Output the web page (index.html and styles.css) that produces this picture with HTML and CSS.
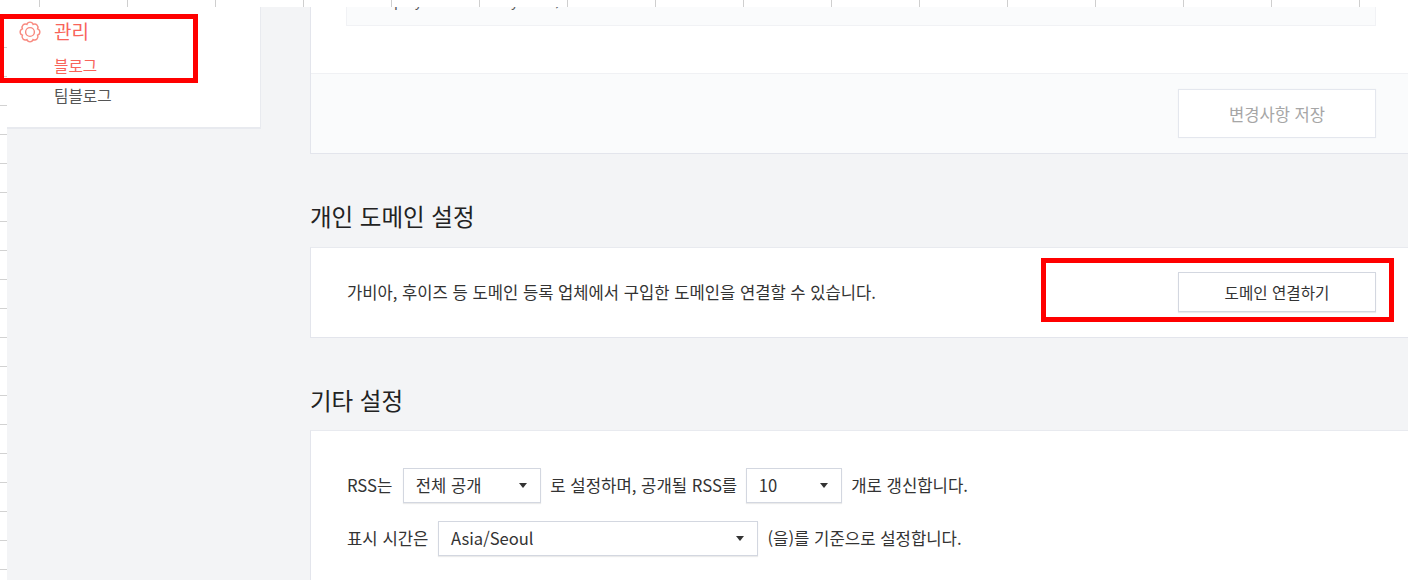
FILE: index.html
```html
<!DOCTYPE html>
<html lang="ko">
<head>
    <meta charset="UTF-8">
    <meta name="viewport" content="width=device-width, initial-scale=1.0">
    <title>블로그 관리</title>
    <link rel="stylesheet" href="styles.css">
</head>
<body>
    <div class="sheet-top"></div>
    <div class="layout">
        <div class="sheet-left"></div>
        <div class="side-col">
            <aside class="sidebar">
                <div class="menu-title">
                    <svg class="gear" width="22" height="22" viewBox="0 0 22 22" fill="none" stroke="#f8897f" stroke-width="1.4">
                        <path d="M18.58 7.86A3.3 3.3 0 0 1 18.58 14.14A3.3 3.3 0 0 1 14.14 18.58A3.3 3.3 0 0 1 7.86 18.58A3.3 3.3 0 0 1 3.42 14.14A3.3 3.3 0 0 1 3.42 7.86A3.3 3.3 0 0 1 7.86 3.42A3.3 3.3 0 0 1 14.14 3.42A3.3 3.3 0 0 1 18.58 7.86Z"/>
                        <circle cx="11" cy="11" r="4.4"/>
                    </svg>
                    <span>관리</span>
                </div>
                <a class="menu-item active">블로그</a>
                <a class="menu-item">팀블로그</a>
            </aside>
        </div>
        <main class="main">
            <section class="card">
                <div class="top-body">
                    <div class="code-box"><span>p</span><span class="frag-y">y</span><span class="frag-y2">y</span><span class="frag-c">,</span></div>
                </div>
                <div class="card-foot">
                    <button class="btn btn-save">변경사항 저장</button>
                </div>
            </section>

            <h3 class="section-title">개인 도메인 설정</h3>
            <section class="card domain-row">
                <p>가비아, 후이즈 등 도메인 등록 업체에서 구입한 도메인을 연결할 수 있습니다.</p>
                <button class="btn btn-link">도메인 연결하기</button>
            </section>

            <h3 class="section-title title-etc">기타 설정</h3>
            <section class="card etc">
                <div class="form-row">
                    <span>RSS는</span>
                    <div class="select sel-open"><span>전체 공개</span><i class="caret"></i></div>
                    <span>로 설정하며, 공개될 RSS를</span>
                    <div class="select sel-count"><span>10</span><i class="caret"></i></div>
                    <span>개로 갱신합니다.</span>
                </div>
                <div class="form-row">
                    <span>표시 시간은</span>
                    <div class="select sel-zone"><span>Asia/Seoul</span><i class="caret"></i></div>
                    <span>(을)를 기준으로 설정합니다.</span>
                </div>
            </section>
        </main>
    </div>

    <!-- red boxes someone drew on top of the capture -->
    <div class="mark mark-menu"></div>
    <div class="mark mark-btn"></div>
</body>
</html>
```

FILE: styles.css
```css
html, body {
    margin: 0;
    height: 580px;
    overflow: hidden;
}
body {
    position: relative;
    background: #fff;
    color: #333;
    font-family: "Noto Sans CJK KR", "Noto Sans", sans-serif;
    font-size: 16.6px;
}
.sheet-top {
    height: 7px;
    background: repeating-linear-gradient(90deg, transparent 0 39px, #cfcfcf 39px 40px, transparent 40px 88px);
}
.layout {
    display: flex;
    height: 573px;
    overflow: hidden;
}
.sheet-left {
    flex: none;
    width: 7px;
    background: repeating-linear-gradient(180deg, transparent 0 11px, #d2d2d2 11px 12px, transparent 12px 29px);
}
.side-col {
    flex: none;
    width: 254px;
    background: #f3f4f6;
}
.sidebar {
    box-sizing: border-box;
    height: 122px;
    padding-top: 10px;
    background: #fff;
    border-right: 1px solid #e8eaef;
    border-bottom: 2px solid #e8eaef;
}
.menu-title {
    display: flex;
    align-items: center;
    height: 28px;
    padding-left: 12px;
    color: #f8645a;
    font-size: 19px;
}
.menu-title span {
    margin-top: -2px;
}
.gear {
    margin-top: 1px;
    margin-right: 13px;
}
.menu-item {
    display: block;
    margin-top: 7px;
    padding-left: 47px;
    height: 23px;
    line-height: 23px;
    font-size: 15.7px;
    color: #555;
}
.menu-item.active {
    margin-top: 9px;
    color: #f8645a;
}
.main {
    flex: 1;
    min-width: 0;
    padding-left: 49px;
    background: #f3f4f6;
}
.card {
    box-sizing: border-box;
    width: 1101px;
    background: #fff;
    border: 1px solid #e3e5ec;
    border-top-color: #e8eaef;
}
.card:first-child {
    border-top: 0;
}
.top-body {
    height: 66px;
    padding: 0 35px;
}
.code-box {
    box-sizing: border-box;
    display: flex;
    width: 1030px;
    height: 19px;
    overflow: hidden;
    background: #fafbfc;
    border: 1px solid #f1f2f5;
    border-top: 0;
    font-size: 14px;
    line-height: 20px;
    color: #555;
}
.code-box span {
    margin-top: -17px;
    margin-left: 47px;
}
.code-box .frag-y {
    margin-left: 12px;
}
.code-box .frag-y2 {
    margin-left: 89px;
}
.code-box .frag-c {
    margin-left: 37px;
}
.card-foot {
    box-sizing: border-box;
    display: flex;
    justify-content: flex-end;
    align-items: center;
    height: 80px;
    padding-right: 34px;
    background: #fafbfc;
    border-top: 1px solid #f0f1f4;
}
.btn {
    box-sizing: border-box;
    width: 198px;
    background: #fff;
    font-family: inherit;
    padding: 0;
}
.btn-save {
    height: 49px;
    font-size: 16.6px;
    color: #a6a6a6;
    border: 1px solid #e4e7ee;
    box-shadow: 0 0 1px rgba(0, 0, 0, 0.06);
}
.btn-link {
    height: 40px;
    font-size: 15.6px;
    color: #333;
    border: 1px solid #d3d7e0;
    box-shadow: 0 1px 1px rgba(0, 0, 0, 0.08);
}
.section-title {
    margin: 0;
    padding: 47px 0 16px;
    font-size: 23.5px;
    font-weight: 400;
    line-height: 30px;
    color: #222;
}
.title-etc {
    padding: 47px 0 15px;
}
.domain-row {
    display: flex;
    justify-content: space-between;
    align-items: center;
    height: 91px;
    padding: 0 34px 1px 36px;
}
.domain-row p {
    margin: 0;
}
.etc {
    height: 200px;
    padding: 37px 36px;
}
.form-row {
    display: flex;
    align-items: center;
    gap: 9.5px;
    height: 34px;
    margin-bottom: 19px;
    font-size: 16.7px;
}
.select {
    box-sizing: border-box;
    display: flex;
    justify-content: space-between;
    align-items: center;
    height: 35px;
    padding: 0 13px 0 12px;
    background: #fff;
    border: 1px solid #d3d7e0;
    box-shadow: 0 1px 1px rgba(0, 0, 0, 0.08);
    font-size: 16.6px;
}
.sel-open { width: 138px; margin-left: 1px; }
.sel-count { width: 96px; margin-left: -1px; }
.sel-zone { width: 320px; }
.caret {
    width: 0;
    height: 0;
    border-left: 4px solid transparent;
    border-right: 4px solid transparent;
    border-top: 5px solid #333;
}
.mark {
    position: absolute;
    box-sizing: border-box;
    border: 5px solid #ff0000;
}
.mark-menu {
    left: -1px;
    top: 14px;
    width: 199px;
    height: 69px;
}
.mark-btn {
    left: 1041px;
    top: 258px;
    width: 353px;
    height: 64px;
}
```
